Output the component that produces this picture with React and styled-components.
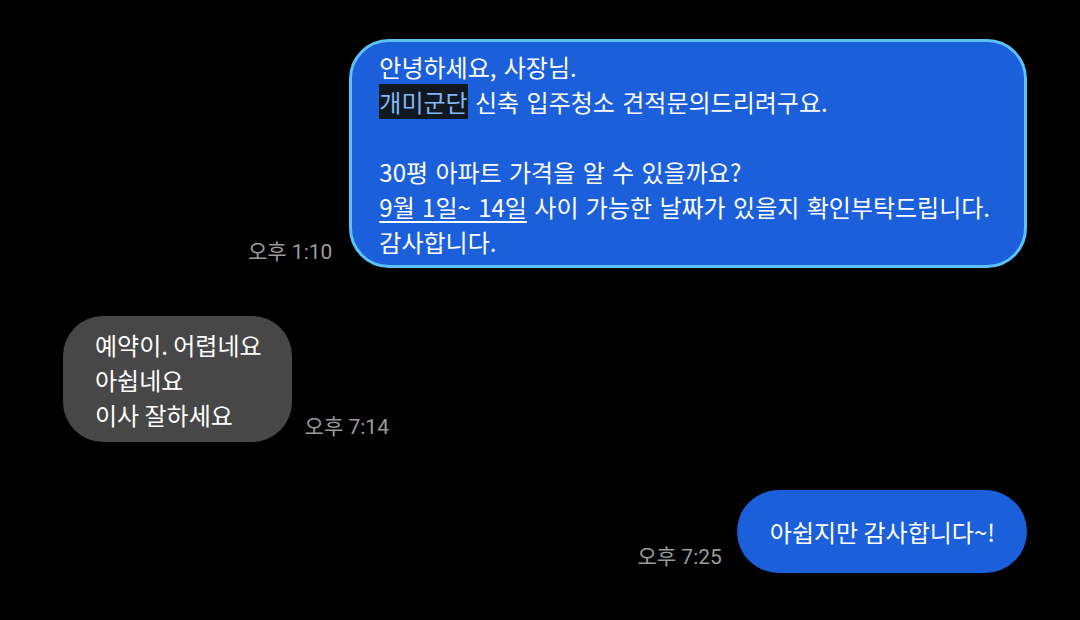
import React from "react";
import styled, { createGlobalStyle } from "styled-components";

const Global = createGlobalStyle`
    html, body {
        margin: 0;
        padding: 0;
        background: #000000;
    }
    body {
        font-family: "Noto Sans CJK KR", "Noto Sans", sans-serif;
    }
`

const Chat = styled.div`
    width: 1080px;
    height: 620px;
    box-sizing: border-box;
    padding: 39px 53px 0 63px;
    display: flex;
    flex-direction: column;
    gap: 48px;
    background: #000000;
    overflow: hidden;
`

const Row = styled.div`
    display: flex;
    align-items: flex-end;
    justify-content: ${p => (p.$mine ? "flex-end" : "flex-start")};
    gap: ${p => p.$gap}px;
`

const Time = styled.span`
    font-family: Roboto, "Noto Sans CJK KR", sans-serif;
    font-size: 21px;
    line-height: 26px;
    color: #9b9b9b;
    margin-bottom: ${p => p.$bottom}px;
    white-space: nowrap;
`

const Bubble = styled.div`
    box-sizing: border-box;
    white-space: pre;
    font-size: 24px;
    line-height: 35px;
    word-spacing: ${p => p.$spacing || 0}px;
    color: #ffffff;
    background: ${p => (p.$mine ? "#1b5fdb" : "#474747")};
    border: ${p => (p.$outlined ? "3px solid #5cc1f7" : "none")};
    border-radius: ${p => p.$radius}px;
    padding: ${p => p.$pad};
`

const Mark = styled.span`
    background: #111820;
    color: #84b6fa;
`

const Under = styled.span`
    text-decoration: underline;
    text-decoration-thickness: 2px;
    text-underline-offset: 4px;
`

export default function App() {
    return (
        <>
            <Global />
            <Chat>
                <Row $mine $gap={17}>
                    <Time $bottom={3}>오후 1:10</Time>
                    <Bubble $mine $outlined $spacing={2} $radius={40} $pad="7px 34px 6px 27px">
                        {"안녕하세요, 사장님.\n"}
                        <Mark>개미군단</Mark>
                        {" 신축 입주청소 견적문의드리려구요.\n\n30평 아파트 가격을 알 수 있을까요?\n"}
                        <Under>9월 1일~ 14일</Under>
                        {" 사이 가능한 날짜가 있을지 확인부탁드립니다.\n감사합니다."}
                    </Bubble>
                </Row>
                <Row $gap={13}>
                    <Bubble $radius={40} $pad="11px 30px 10px 32px">
                        {"예약이. 어렵네요\n아쉽네요\n이사 잘하세요"}
                    </Bubble>
                    <Time $bottom={2}>오후 7:14</Time>
                </Row>
                <Row $mine $gap={15}>
                    <Time $bottom={3}>오후 7:25</Time>
                    <Bubble $mine $radius={42} $pad="24px 32px 24px 33px">
                        아쉽지만 감사합니다~!
                    </Bubble>
                </Row>
            </Chat>
        </>
    );
}
